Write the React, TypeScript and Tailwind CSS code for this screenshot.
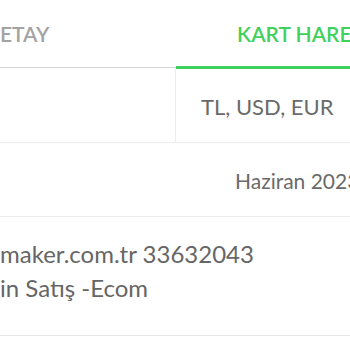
const rows = [
  { label: "", value: "TL, USD, EUR" },
  { label: "", value: "Haziran 2023" },
];

const App = () => {
  return (
    <main
      className="w-[350px] h-[350px] overflow-hidden bg-white whitespace-nowrap"
      style={{ fontFamily: "Lato, 'Open Sans', sans-serif" }}
    >
      {/* tabs */}
      <div className="flex h-[69px]">
        <div className="w-[176px] shrink-0 border-b border-[#d4d4d4] pt-[18px] text-[21px] font-semibold text-[#a3a3a3] mb-[1px]">
          ETAY
        </div>
        <div className="flex-1 min-w-0 border-b-[3px] border-[#3fd15b] pt-[18px] pl-[61px] text-[21px] font-semibold text-[#3fd15b] overflow-hidden">
          KART HAREKETLERİ
        </div>
      </div>

      {/* currency row */}
      <div className="flex h-[74px] border-b border-[#ececec]">
        <div className="w-[176px] shrink-0 border-r border-[#ececec]">{rows[0].label}</div>
        <div className="flex-1 min-w-0 pl-[25px] pt-[21px] text-[22px] text-[#6a6a6a]">
          {rows[0].value}
        </div>
      </div>

      {/* date row */}
      <div className="flex h-[74px] border-b border-[#ececec]">
        <div className="w-[176px] shrink-0">{rows[1].label}</div>
        <div className="flex-1 min-w-0 pl-[59px] pt-[22px] text-[21px] text-[#6a6a6a]">
          {rows[1].value}
        </div>
      </div>

      {/* merchant */}
      <div className="h-[119px] border-b border-[#e6e6e6] pt-[20px] text-[24px] leading-[34px] text-[#666666]">
        <p>maker.com.tr 33632043</p>
        <p>in Satış -Ecom</p>
      </div>
    </main>
  );
};

export default App;
